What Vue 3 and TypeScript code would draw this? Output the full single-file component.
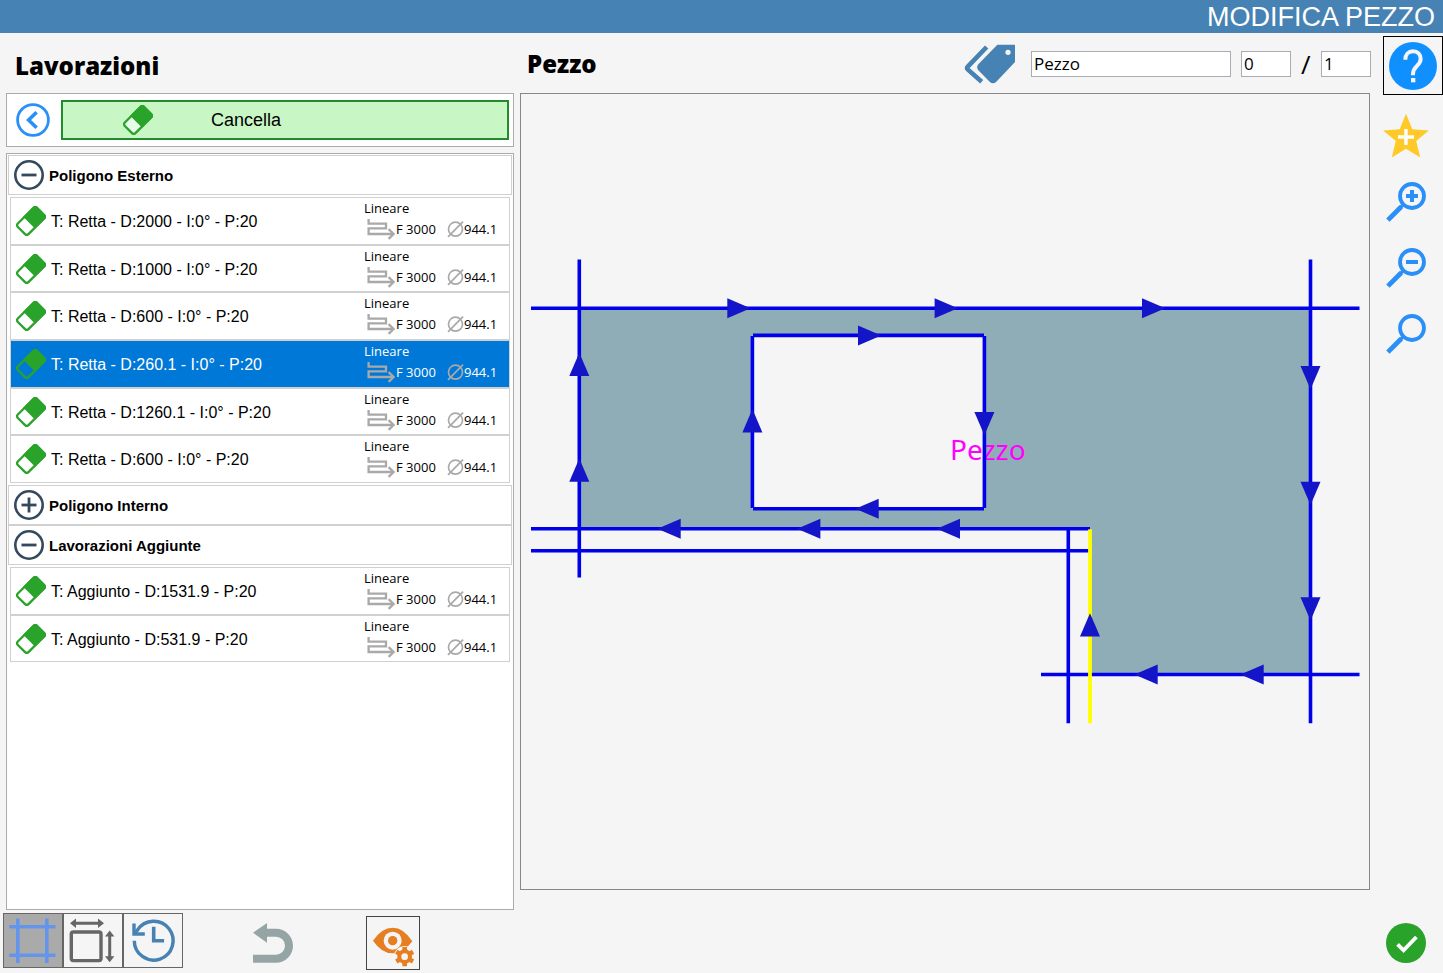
<script setup lang="ts">
import { computed, ref } from 'vue'

interface Operation {
  id: number
  label: string
}

interface Group {
  name: string
  open: boolean
  operations: Operation[]
}

type Direction = 'right' | 'left' | 'up' | 'down'

interface Arrow {
  x: number
  y: number
  dir: Direction
}

const groups = ref<Group[]>([
  {
    name: 'Poligono Esterno',
    open: true,
    operations: [
      { id: 1, label: 'T: Retta - D:2000 - I:0° - P:20' },
      { id: 2, label: 'T: Retta - D:1000 - I:0° - P:20' },
      { id: 3, label: 'T: Retta - D:600 - I:0° - P:20' },
      { id: 4, label: 'T: Retta - D:260.1 - I:0° - P:20' },
      { id: 5, label: 'T: Retta - D:1260.1 - I:0° - P:20' },
      { id: 6, label: 'T: Retta - D:600 - I:0° - P:20' },
    ],
  },
  { name: 'Poligono Interno', open: false, operations: [] },
  {
    name: 'Lavorazioni Aggiunte',
    open: true,
    operations: [
      { id: 7, label: 'T: Aggiunto - D:1531.9 - P:20' },
      { id: 8, label: 'T: Aggiunto - D:531.9 - P:20' },
    ],
  },
])

const selectedId = ref(4)
const pieceName = ref('Pezzo')
const pieceIndex = ref('0')
const pieceTotal = ref('1')

const cuts: number[][] = [
  [531, 308.3, 1359.5, 308.3],
  [579.3, 259.5, 579.3, 577.5],
  [531, 528.7, 1090, 528.7],
  [531, 550.7, 1089, 550.7],
  [1068.3, 528.7, 1068.3, 723.3],
  [1041, 674.5, 1359.5, 674.5],
  [1310.5, 259.5, 1310.5, 723.3],
  [753, 335.4, 984, 335.4],
  [984.4, 336, 984.4, 508],
  [984, 508.7, 753, 508.7],
  [752.4, 508, 752.4, 336],
]

const arrows: Arrow[] = [
  { x: 727.3, y: 308.3, dir: 'right' },
  { x: 934.6, y: 308.3, dir: 'right' },
  { x: 1142, y: 308.3, dir: 'right' },
  { x: 858, y: 335.4, dir: 'right' },
  { x: 680.7, y: 528.7, dir: 'left' },
  { x: 820.4, y: 528.7, dir: 'left' },
  { x: 960, y: 528.7, dir: 'left' },
  { x: 878.7, y: 508.7, dir: 'left' },
  { x: 1157.7, y: 674.5, dir: 'left' },
  { x: 1263.7, y: 674.5, dir: 'left' },
  { x: 579.3, y: 376, dir: 'up' },
  { x: 579.3, y: 481.7, dir: 'up' },
  { x: 752.4, y: 432.4, dir: 'up' },
  { x: 1090, y: 636.6, dir: 'up' },
  { x: 984.4, y: 412, dir: 'down' },
  { x: 1310.5, y: 366, dir: 'down' },
  { x: 1310.5, y: 481.7, dir: 'down' },
  { x: 1310.5, y: 597.3, dir: 'down' },
]

const angle: Record<Direction, number> = { right: 0, down: 90, left: 180, up: 270 }

const arrowMarks = computed(() =>
  arrows.map((a) => `translate(${a.x} ${a.y}) rotate(${angle[a.dir]})`),
)

function toggle(group: Group) {
  group.open = !group.open
}
</script>

<template>
  <div class="app">
    <header class="title-bar">
      <h1>MODIFICA PEZZO</h1>
    </header>

    <div class="body">
      <section class="side">
        <div class="heading">
          <h2>Lavorazioni</h2>
        </div>

        <div class="actions">
          <button type="button" class="back" aria-label="Indietro">
            <svg width="34" height="34" viewBox="0 0 34 34" fill="none" stroke="#2a8ff7">
              <circle cx="17" cy="17" r="15.4" stroke-width="2.8" />
              <path d="M20.6 9.2 12.6 17l8 7.8" stroke-width="3.6" />
            </svg>
          </button>
          <button type="button" class="clear">
            <svg width="30" height="30" viewBox="0 0 30 30" fill="#29a329">
              <g transform="rotate(-45 15 15)">
                <rect x="1.5" y="7.5" width="27" height="15" rx="2.4" fill="#e9fbe9" stroke="#29a329" stroke-width="2.3" />
                <path d="M12.4 6.500h14a3.200 3.200 0 0 1 3.200 3.200v10.600a3.200 3.200 0 0 1-3.200 3.200h-14z" />
              </g>
            </svg>
            <span>Cancella</span>
          </button>
        </div>

        <div class="tree">
          <template v-for="group in groups" :key="group.name">
            <button type="button" class="group" :aria-expanded="group.open" @click="toggle(group)">
              <svg width="30" height="30" viewBox="0 0 30 30" fill="none" stroke="#34495e">
                <circle cx="15" cy="15" r="13.700" stroke-width="2.600" />
                <path d="M7.5 15h15" stroke-width="2.800" />
                <path v-if="!group.open" d="M15 7.5v15" stroke-width="2.800" />
              </svg>
              <span>{{ group.name }}</span>
            </button>
            <ul v-if="group.open && group.operations.length" class="rows">
              <li v-for="op in group.operations" :key="op.id">
                <button
                  type="button"
                  class="row"
                  :class="{ selected: op.id === selectedId }"
                  :aria-pressed="op.id === selectedId"
                  @click="selectedId = op.id"
                >
                  <svg width="30" height="30" viewBox="0 0 30 30" fill="#29a329">
                    <g transform="rotate(-45 15 15)">
                      <rect x="1.5" y="7.5" width="27" height="15" rx="2.4" fill="none" stroke="#29a329" stroke-width="2.3" />
                      <path d="M12.4 6.500h14a3.200 3.200 0 0 1 3.200 3.200v10.600a3.200 3.200 0 0 1-3.200 3.200h-14z" />
                    </g>
                  </svg>
                  <span class="label">{{ op.label }}</span>
                  <span class="meta">
                    <span class="kind">Lineare</span>
                    <span class="values">
                      <svg width="28" height="22" viewBox="0 0 28 22" fill="none" stroke="#a9a9a9" stroke-width="2.300">
                        <path d="M1.6 1v4.6H19v4.8H1.6v5.6H26" />
                        <path d="m21.6 11.2 5 4.8-5 4.8" />
                      </svg>
                      <span>F 3000</span>
                      <svg width="17" height="18" viewBox="0 0 17 18" fill="none" stroke="#a9a9a9" stroke-width="1.700">
                        <circle cx="8.5" cy="9.2" r="7" />
                        <path d="M1 16.8 16 1.6" />
                      </svg>
                      <span>944.1</span>
                    </span>
                  </span>
                </button>
              </li>
            </ul>
          </template>
        </div>

        <div class="tools">
          <div class="modes">
            <button type="button" class="mode active" aria-label="Griglia">
              <svg width="58" height="53" viewBox="0 0 58 53" fill="none" stroke="#6495ed" stroke-width="3.6">
                <path d="M13.8 4.4V49M42.8 4.4V49M5.3 12.7h46.2M5.3 41.2h46.2" />
              </svg>
            </button>
            <button type="button" class="mode" aria-label="Dimensioni">
              <svg width="58" height="53" viewBox="0 0 58 53" fill="none" stroke="#666" stroke-width="3.400">
                <rect x="7.300" y="18" width="29.700" height="28.600" rx="2" />
                <path d="M10 9.3h26M45.7 21v23" stroke-width="3" />
                <path d="M6 9.3 12 4.6V14zM40 9.3 34 4.6V14zM45.7 16.6 41 22.6h9.4zM45.7 48.3 41 42.3h9.4z" fill="#666" stroke="none" />
              </svg>
            </button>
            <button type="button" class="mode" aria-label="Cronologia">
              <svg width="58" height="53" viewBox="0 0 58 53" fill="none" stroke="#4682b4" stroke-width="3.400">
                <path d="M10.300 26.700A19.400 19.400 0 1 0 13.500 16L10.600 19.800" />
                <path d="M10 9.4v10.600h10.800" stroke-width="3.4" />
                <path d="M29.7 12.8v14h10.4" stroke-width="3.600" />
              </svg>
            </button>
          </div>
          <button type="button" class="undo" aria-label="Annulla">
            <svg width="40" height="40" viewBox="69 70 120 120">
              <path d="M108 99h30a39 39 0 0 1 0 78H69" fill="none" stroke="#95a5a6" stroke-width="24" />
              <path d="M69 99 111 70v59z" fill="#95a5a6" />
            </svg>
          </button>
          <button type="button" class="view" aria-label="Opzioni di visualizzazione">
            <svg width="52" height="52" viewBox="411 51 156 156">
              <path d="M429 122q26-39 59-39t59 41q-26 36-59 36t-59-38z" fill="#e67e22" />
              <circle cx="488" cy="122" r="27" fill="#f5f5f5" />
              <circle cx="488" cy="122" r="14" fill="#e67e22" />
              <circle cx="524" cy="170" r="32" fill="#f5f5f5" />
              <circle cx="524" cy="170" r="16" fill="none" stroke="#e67e22" stroke-width="12" />
              <path d="M524 141v10M524 189v10M498.900 155.500l8.600 5M540.500 179.500l8.600 5M498.900 184.500l8.600-5M540.500 160.500l8.600-5" stroke="#e67e22" stroke-width="14" />
            </svg>
          </button>
        </div>
      </section>

      <main class="piece">
        <div class="heading piece-heading">
          <h2>Pezzo</h2>
          <form class="fields" @submit.prevent>
            <svg width="52" height="41" viewBox="42 127 156 123">
              <path d="M110 139 54 197q-5 5 0 10l41 36" fill="none" stroke="#4682b4" stroke-width="14" />
              <path fill-rule="evenodd" d="M142 132h53v52l-56 59q-10 9-20 0l-34-34q-7-9 0-18zM174 147a8 8 0 1 0 .1 0z" fill="#4682b4" />
            </svg>
            <input v-model="pieceName" class="name" type="text" aria-label="Nome pezzo" />
            <input v-model="pieceIndex" class="count" type="text" aria-label="Indice" />
            <span class="slash">/</span>
            <input v-model="pieceTotal" class="count" type="text" aria-label="Totale" />
          </form>
        </div>
        <div class="canvas">
          <svg viewBox="521 94 848 795" role="img" aria-label="Disegno del pezzo">
            <path
              fill="#8fadb6"
              fill-rule="evenodd"
              d="M579.300 308.300H1310.500V674.500H1090V528.700H579.300ZM752.400 335.400V508.700H984.400V335.400Z"
            />
            <text x="950" y="460">Pezzo</text>
            <g stroke="#0000eb" stroke-width="3.6">
              <line v-for="(c, i) in cuts" :key="i" :x1="c[0]" :y1="c[1]" :x2="c[2]" :y2="c[3]" />
            </g>
            <line x1="1090" y1="529.300" x2="1090" y2="723.300" stroke="#ffff00" stroke-width="3.8" />
            <path v-for="(mark, i) in arrowMarks" :key="i" :transform="mark" d="M0-10 23.300 0 0 10z" fill="#1414c8" />
          </svg>
        </div>
      </main>

      <aside class="rail">
        <button type="button" class="help" aria-label="Aiuto">
          <svg width="50" height="50" viewBox="1314 122 150 150">
            <circle cx="1389" cy="197" r="72" fill="#1090ff" />
            <path d="M1366 178c0-16 9-25 23-25s23 9 23 23c0 20-23 22-23 44v5" fill="none" stroke="#f5f5f5" stroke-width="12" />
            <path d="M1383 233h13v13h-13z" fill="#f5f5f5" />
          </svg>
        </button>
        <button type="button" class="star" aria-label="Aggiungi ai preferiti">
          <svg width="46" height="46" viewBox="0 0 46 46">
            <path d="m23 .8 6.300 15.400 16.500 1.200L33.200 28.100 37.200 44.600 23 35.800 8.800 44.600l4-16.500L.2 17.400l16.500-1.200z" fill="#ffca28" />
            <path d="M23 16v16M15 24h16" stroke="#fff" stroke-width="3.400" />
          </svg>
        </button>
        <button v-for="sign in ['plus', 'minus', 'none']" :key="sign" type="button" class="zoom" :aria-label="'Zoom ' + sign">
          <svg width="40" height="40" viewBox="0 0 40 40" fill="none" stroke="#2a8ff7">
            <circle cx="26" cy="14" r="12" stroke-width="3.800" />
            <path d="M17.600 22.400 14 26" stroke-width="3.400" />
            <path d="M15.200 24.800 1.900 38.100" stroke-width="4.800" />
            <path v-if="sign !== 'none'" d="M20 14h12" stroke-width="4" />
            <path v-if="sign === 'plus'" d="M26 8v12" stroke-width="4" />
          </svg>
        </button>
        <button type="button" class="confirm" aria-label="Conferma">
          <svg width="40" height="40" viewBox="0 0 40 40">
            <circle cx="20" cy="20" r="20" fill="#29a329" />
            <path d="m11.600 21.400 6 6L30.400 14" fill="none" stroke="#fff" stroke-width="3.800" />
          </svg>
        </button>
      </aside>
    </div>
  </div>
</template>

<style>
body {
  margin: 0;
  background: #f5f5f5;
}
</style>

<style scoped>
.app {
  display: flex;
  flex-direction: column;
  min-height: 100vh;
  background: #f5f5f5;
  color: #000;
  font-family: "Liberation Sans", Arial, sans-serif;
}

.app *,
.app *::before {
  box-sizing: border-box;
}

svg {
  display: block;
  flex: none;
}

button {
  margin: 0;
  padding: 0;
  border: 0;
  background: none;
  color: inherit;
  font: inherit;
  text-align: left;
  cursor: pointer;
}

.title-bar {
  display: flex;
  justify-content: flex-end;
  align-items: center;
  height: 33px;
  padding: 1px 8px 0 0;
  background: #4682b4;
}

h1 {
  margin: 0;
  color: #fff;
  font-size: 27px;
  font-weight: 400;
  line-height: 32px;
}

h2 {
  margin: 0;
  font-family: "Open Sans", "Noto Sans", sans-serif;
  font-size: 24px;
  font-weight: 800;
  line-height: 32px;
}

.body {
  display: flex;
  flex: 1;
}

.side {
  display: flex;
  flex-direction: column;
  flex: none;
  width: 514px;
  padding-left: 6px;
}

.heading {
  display: flex;
  align-items: center;
  height: 60px;
  padding: 6px 0 0 9px;
}

.actions {
  display: flex;
  align-items: center;
  height: 54px;
  padding: 0 4px 0 9px;
  border: 1px solid #ababab;
  background: #fff;
}

.clear {
  display: flex;
  flex: 1;
  align-items: center;
  gap: 58px;
  height: 40px;
  margin-left: 11px;
  padding-left: 60px;
  border: 2px solid #228b2e;
  background: #c8f7c5;
  font-size: 18px;
}

.tree {
  flex: 1;
  margin-top: 6px;
  padding: 1px;
  border: 1px solid #ababab;
  background: #fff;
}

.group {
  display: flex;
  align-items: center;
  gap: 5px;
  width: 100%;
  height: 40px;
  padding-left: 5px;
  border: 1px solid #d0d0d0;
  font-size: 15px;
  font-weight: 700;
}

.rows {
  margin: 2px;
  padding: 0;
  list-style: none;
}

.row {
  display: flex;
  align-items: center;
  width: 100%;
  height: 48px;
  padding: 0 13px 0 5px;
  border: 1px solid #d0d0d0;
  font-size: 16px;
}

.rows li:nth-child(3n + 2) .row {
  height: 47px;
}

.row.selected {
  background: #0078d7;
  color: #fff;
}

.label {
  flex: 1;
  padding: 2px 0 0 5px;
}

.meta {
  width: 132px;
  padding-bottom: 4px;
  font-family: "Open Sans", "Noto Sans", sans-serif;
  font-size: 13px;
  line-height: 20px;
}

.kind {
  display: block;
}

.values {
  display: grid;
  grid-template-columns: 29px 51px 17px auto;
  align-items: center;
  padding-left: 3px;
}

.tools {
  display: flex;
  align-items: center;
  height: 63px;
  margin-left: -3px;
}

.modes {
  display: flex;
  margin-bottom: 2px;
}

.mode {
  width: 60px;
  height: 55px;
  border: 1px solid #666;
}

.mode.active {
  background: #aaa;
}

.undo {
  margin: 2px 0 0 70px;
}

.view {
  margin: 2px 0 0 73px;
  border: 1px solid #444;
}

.piece {
  display: flex;
  flex: 1;
  flex-direction: column;
  min-width: 0;
  margin-left: 6px;
  padding-bottom: 83px;
}

.piece-heading {
  justify-content: space-between;
  padding: 1px 0 0 7px;
}

.fields {
  display: flex;
  align-items: center;
  gap: 10px;
  margin-right: -1px;
}

input {
  height: 26px;
  padding: 0 2px;
  border: 1px solid #ababb3;
  border-radius: 0;
  background: #fff;
  color: #000;
  font-family: "Open Sans", "Noto Sans", sans-serif;
  font-size: 17px;
  font-weight: 500;
}

.name {
  width: 200px;
  margin-left: 5px;
}

.count {
  width: 50px;
}

.slash {
  width: 10px;
  font-family: "Open Sans", "Noto Sans", sans-serif;
  font-size: 26px;
  font-weight: 500;
  line-height: 26px;
}

.canvas {
  display: flex;
  flex: 1;
  border: 1px solid #888;
}

.canvas svg {
  flex: 1;
  width: 100%;
  min-width: 0;
}

.canvas text {
  fill: #f0f;
  font-family: "Noto Sans", "Open Sans", sans-serif;
  font-size: 28px;
}

.rail {
  display: flex;
  flex: none;
  flex-direction: column;
  align-items: flex-start;
  width: 73px;
  padding: 3px 0 10px 13px;
}

.help {
  display: grid;
  place-items: center;
  width: 60px;
  height: 59px;
  border: 1px solid #000;
}

.star {
  margin-top: 18px;
}

.zoom {
  margin: 23px 0 3px 3px;
}

.confirm {
  margin: auto 0 0 3px;
}
</style>
